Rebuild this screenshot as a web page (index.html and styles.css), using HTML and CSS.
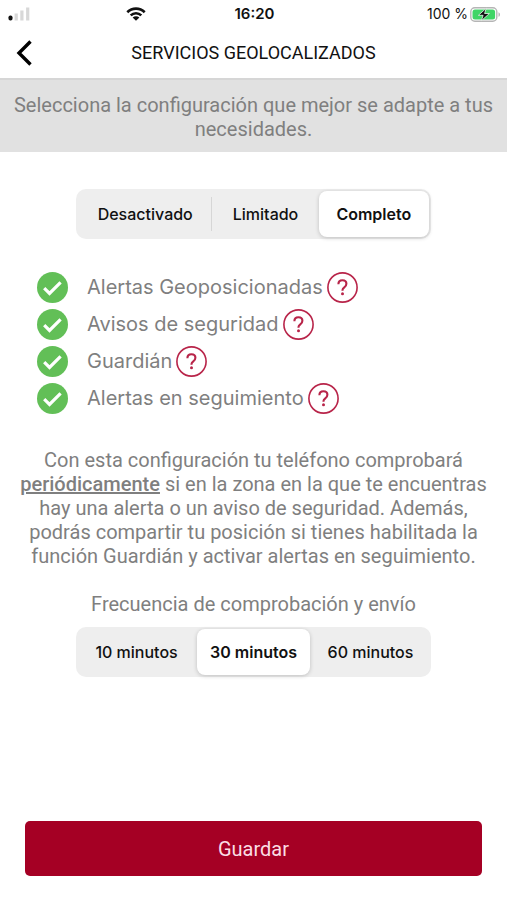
FILE: index.html
```html
<!DOCTYPE html>
<html lang="es">
<head>
<meta charset="utf-8">
<meta name="viewport" content="width=device-width, initial-scale=1">
<title>Servicios geolocalizados</title>
<link rel="stylesheet" href="styles.css">
</head>
<body>
<svg class="sprite" aria-hidden="true">
  <symbol id="check" viewBox="0 0 31 31">
    <circle cx="15.5" cy="15.5" r="15.5" fill="#62bf57"/>
    <path d="M7.2 16.2l5.3 5.2L23.6 10.4" fill="none" stroke="#fff" stroke-width="3.2"/>
  </symbol>
  <symbol id="help" viewBox="0 0 31 31">
    <circle cx="15.5" cy="15.5" r="14.6" fill="none" stroke="#b82449" stroke-width="1.6"/>
    <path d="M11.4 12.3c0-2.7 1.6-4 4-4s4 1.4 4 3.5c0 1.8-.8 2.6-2.1 3.5-1.2.9-1.8 1.4-1.8 2.7v.8" fill="none" stroke="#b82449" stroke-width="2.1"/>
    <circle cx="15.5" cy="21.8" r="1.5" fill="#b82449"/>
  </symbol>
</svg>
<div class="screen">
  <div class="status">
    <div class="status-left">
      <svg class="signal" viewBox="0 0 22 14" aria-hidden="true">
        <rect x="0.5" y="8.5" width="4" height="5" rx="1.8" fill="#111"/>
        <path d="M6.6 6.5h3.2v7H6.6zM12.3 3.5h3.2v10h-3.2zM18.1.5h3.2v13h-3.2z" fill="#d8d8d8"/>
      </svg>
      <svg class="wifi" viewBox="0 0 20 14" aria-hidden="true">
        <path d="M1.3 5.2C6.2.4 13.8.4 18.7 5.2M4.7 8.4c3-2.9 7.6-2.9 10.6 0" fill="none" stroke="#111" stroke-width="2.6"/>
        <path d="M6.6 10.4c2-1.7 4.8-1.7 6.8 0L10 13.8z" fill="#111"/>
      </svg>
    </div>
    <span class="clock">16:20</span>
    <div class="status-right">
      <span class="charge">100 %</span>
      <svg class="battery" viewBox="0 0 31 15" aria-hidden="true">
        <rect x=".8" y=".8" width="26" height="13.4" rx="4" fill="#fff" stroke="#b5b5b5" stroke-width="1.4"/>
        <rect x="2.5" y="2.5" width="22.6" height="10" rx="2.5" fill="#3fd566"/>
        <path d="M28.5 5.2c2 .8 2 3.8 0 4.6z" fill="#b5b5b5"/>
        <path d="M16.2 1.3L8.4 8.3h4.7l-1.7 5.4 8-7.2h-4.8z" fill="#111" stroke="#eafbee" stroke-width=".8"/>
      </svg>
    </div>
  </div>
  <header class="header">
    <button class="back" type="button" aria-label="Atrás">
      <svg viewBox="0 0 16 26" aria-hidden="true"><path d="M14.5 1.5L3 13l11.5 11.5" fill="none" stroke="#000" stroke-width="3.4"/></svg>
    </button>
    <h1>SERVICIOS GEOLOCALIZADOS</h1>
  </header>
  <p class="banner">Selecciona la configuración que mejor se adapte a tus necesidades.</p>
  <main>
    <div class="segments modes" role="radiogroup" aria-label="Configuración">
      <label><input type="radio" name="mode"><span>Desactivado</span></label>
      <label><input type="radio" name="mode"><span>Limitado</span></label>
      <label><input type="radio" name="mode" checked><span>Completo</span></label>
    </div>
    <ul class="features">
      <li><svg class="check"><use href="#check"/></svg><span>Alertas Geoposicionadas</span><button type="button" class="help" aria-label="Ayuda"><svg><use href="#help"/></svg></button></li>
      <li><svg class="check"><use href="#check"/></svg><span>Avisos de seguridad</span><button type="button" class="help" aria-label="Ayuda"><svg><use href="#help"/></svg></button></li>
      <li><svg class="check"><use href="#check"/></svg><span>Guardián</span><button type="button" class="help" aria-label="Ayuda"><svg><use href="#help"/></svg></button></li>
      <li><svg class="check"><use href="#check"/></svg><span>Alertas en seguimiento</span><button type="button" class="help" aria-label="Ayuda"><svg><use href="#help"/></svg></button></li>
    </ul>
    <p class="info">Con esta configuración tu teléfono comprobará <strong>periódicamente</strong> si en la zona en la que te encuentras hay una alerta o un aviso de seguridad. Además, podrás compartir tu posición si tienes habilitada la función Guardián y activar alertas en seguimiento.</p>
    <h2 id="freq">Frecuencia de comprobación y envío</h2>
    <div class="segments frequency" role="radiogroup" aria-labelledby="freq">
      <label><input type="radio" name="freq"><span>10 minutos</span></label>
      <label><input type="radio" name="freq" checked><span>30 minutos</span></label>
      <label><input type="radio" name="freq"><span>60 minutos</span></label>
    </div>
  </main>
  <footer><button class="save" type="button">Guardar</button></footer>
</div>
</body>
</html>
```
FILE: styles.css
```css
* { box-sizing: border-box; }
body {
  margin: 0;
  background: #fff;
  color: #7f7f7f;
  font: 20px/24px Roboto, sans-serif;
}
h1, h2, p, ul { margin: 0; padding: 0; font-weight: 400; }
button { border: 0; padding: 0; background: none; font: inherit; cursor: pointer; }
svg { display: block; }
.sprite { position: absolute; width: 0; height: 0; }
.screen { min-height: 100vh; display: flex; flex-direction: column; }
.status {
  display: grid;
  grid-template-columns: 1fr auto 1fr;
  align-items: center;
  height: 28px;
  padding: 0 6px 0 8px;
  color: #111;
  font: 15px/20px Inter, sans-serif;
}
.status-left { display: flex; align-items: center; gap: 96px; }
.signal { width: 22px; height: 14px; }
.wifi { width: 20px; height: 14px; }
.clock { font-weight: 600; }
.charge { font-size: 14px; }
.status-right { display: flex; align-items: center; justify-content: flex-end; gap: 2px; }
.battery { width: 31px; height: 15px; }
.header {
  display: grid;
  grid-template-columns: 32px 1fr 32px;
  align-items: center;
  height: 52px;
  padding: 0 16px;
  border-bottom: 2px solid #d6d6d6;
}
.back svg { width: 16px; height: 26px; }
.header h1 { color: #111; font-size: 18px; text-align: center; }
.banner { padding: 13px 12px 11px; background: #e1e1e1; text-align: center; }
main { padding: 37px 20px 20px; }
.segments {
  display: flex;
  width: 76%;
  height: 50px;
  margin: 0 auto;
  padding: 2px;
  border-radius: 10px;
  background: #eee;
  color: #111;
  font: 500 16px/20px Inter, sans-serif;
}
.segments label { flex: 1; display: flex; position: relative; cursor: pointer; }
.segments input { position: absolute; opacity: 0; }
.segments span { flex: 1; display: grid; place-items: center; border-radius: 8px; }
.segments input:checked + span {
  background: #fff;
  box-shadow: 0 1px 4px #0003;
  font-weight: 600;
}
.segments input:focus-visible + span { outline: 2px solid #a50024; }
.modes label:nth-child(1) { flex: 134; }
.modes label:nth-child(2) { flex: 106; }
.modes label:nth-child(3) { flex: 110; }
.modes label:first-child { background: linear-gradient(#d6d6d6, #d6d6d6) right center / 1px 34px no-repeat; }
.frequency span { margin: 0 2px; }
.features { display: grid; gap: 5px; padding: 32px 0 0 17px; list-style: none; font-family: Inter, sans-serif; }
.features li { display: flex; align-items: center; height: 32px; }
.check { width: 31px; height: 31px; margin-right: 19px; }
.help { margin-left: 4px; }
.help svg { width: 31px; height: 31px; }
.info { padding: 34px 0 24px; text-align: center; }
.info strong { text-decoration: underline; font-weight: 500; }
h2 { margin-bottom: 11px; font-size: 20px; text-align: center; }
footer { margin-top: auto; padding: 0 25px 24px; }
.save { width: 100%; height: 55px; border-radius: 5px; background: #a50024; color: #fbdde4; }
```
